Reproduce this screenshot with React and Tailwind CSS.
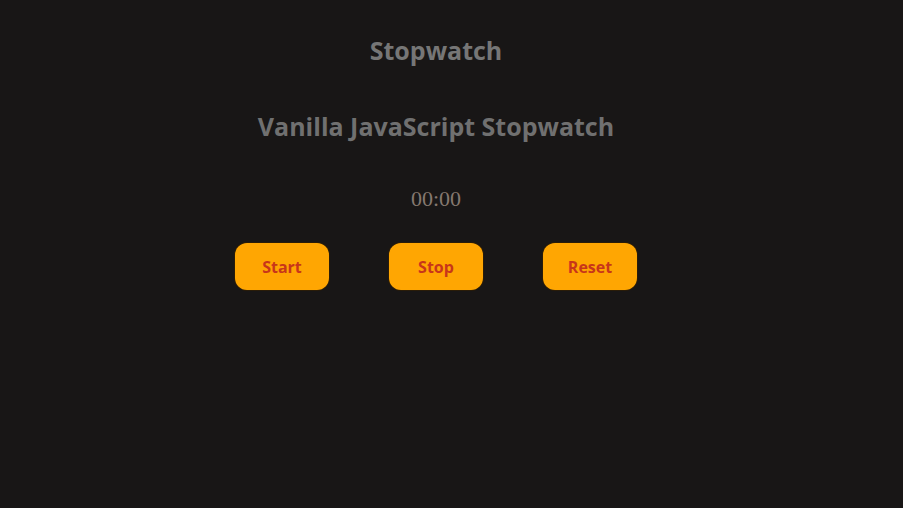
export default function App() {
  const buttons = ["Start", "Stop", "Reset"];
  return (
    <div className="min-h-[508px] w-full bg-[#181616] pr-[31px] font-['Open_Sans','Noto_Sans',sans-serif]">
      <div className="flex flex-col items-center pt-[33px]">
        <h1 className="text-[25px] font-bold leading-[34px] text-[#767676]">Stopwatch</h1>
        <h2 className="mt-[41px] text-[25px] font-bold leading-[36px] text-[#707070]">Vanilla JavaScript Stopwatch</h2>
        <p className="mt-[41px] font-['Liberation_Serif',serif] text-[22px] leading-[28px] text-[#85786f]">00:00</p>
        <div className="mt-[30px] flex gap-[60px]">
          {buttons.map((b) => (
            <button
              key={b}
              className="h-[47px] w-[94px] rounded-[12px] bg-[#ffa602] text-[16px] font-bold text-[#c8361a] shadow-[0_0_0_1px_#2a1c08]"
            >
              {b}
            </button>
          ))}
        </div>
      </div>
    </div>
  );
}
